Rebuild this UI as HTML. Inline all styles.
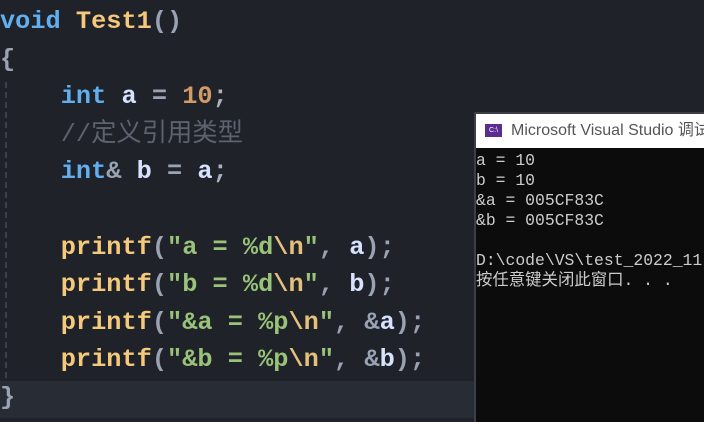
<!DOCTYPE html>
<html><head><meta charset="utf-8"><style>
html,body{margin:0;width:704px;height:422px;overflow:hidden}
body{background:#1f2229;position:relative;font-family:"Liberation Mono","Noto Sans CJK SC",monospace}
.code{position:absolute;left:0;top:3px;font-size:25.3px;font-weight:bold;line-height:37.6px;color:#abb2bf}
.l{height:37.6px;white-space:pre}
.kw{color:#61afef}.fn{color:#f5c97b}.num{color:#d19a66}.cm{color:#5c6370;font-weight:normal}.str{color:#98c379}.esc{color:#e5c07b}.var{color:#d7e2ff}.p{color:#9aa3b3}
.hl{position:absolute;left:0;top:381px;width:476px;height:37px;background:#282c35}
.guide{position:absolute;left:5px;top:82px;height:296px;border-left:2px dashed #3a3f4a}
.con{position:absolute;left:474px;top:112px;width:230px;height:310px;overflow:hidden;background:#0c0c0c;border-left:2px solid #3c3f45;border-top:2px solid #3c3f45;box-sizing:border-box}
.tb{height:34px;background:#fff;font-family:"Liberation Sans","Noto Sans CJK SC",sans-serif;font-size:16px;color:#555;line-height:34px;padding-left:35px;position:relative;white-space:nowrap;overflow:hidden}
.ic{position:absolute;left:9px;top:10px;width:17px;height:13px;background:#5c2d91;color:#fff;font-size:7px;line-height:13px;text-align:center}
.out{font-family:"Liberation Mono","Noto Sans CJK SC",monospace;font-size:16.4px;line-height:20px;color:#cccccc;white-space:pre;padding-top:3px;overflow:hidden}
</style></head><body>
<div class="hl"></div>
<div class="guide"></div>
<div class="code"><div class="l"><span class="kw">void</span> <span class="fn">Test1</span><span class="p">()</span></div><div class="l"><span class="p">{</span></div><div class="l">    <span class="kw">int</span> <span class="var">a</span> <span class="p">=</span> <span class="num">10</span>;</div><div class="l">    <span class="cm">//定义引用类型</span></div><div class="l">    <span class="kw">int</span><span class="p">&amp;</span> <span class="var">b</span> <span class="p">=</span> <span class="var">a</span>;</div><div class="l"> </div><div class="l">    <span class="fn">printf</span><span class="p">(</span><span class="str">"a = %d</span><span class="esc">\n</span><span class="str">"</span><span class="p">,</span> <span class="var">a</span><span class="p">);</span></div><div class="l">    <span class="fn">printf</span><span class="p">(</span><span class="str">"b = %d</span><span class="esc">\n</span><span class="str">"</span><span class="p">,</span> <span class="var">b</span><span class="p">);</span></div><div class="l">    <span class="fn">printf</span><span class="p">(</span><span class="str">"&amp;a = %p</span><span class="esc">\n</span><span class="str">"</span><span class="p">, &amp;</span><span class="var">a</span><span class="p">);</span></div><div class="l">    <span class="fn">printf</span><span class="p">(</span><span class="str">"&amp;b = %p</span><span class="esc">\n</span><span class="str">"</span><span class="p">, &amp;</span><span class="var">b</span><span class="p">);</span></div><div class="l"><span class="p">}</span></div></div>
<div class="con">
<div class="tb"><div class="ic">C:\</div>Microsoft Visual Studio 调试控制台</div>
<div class="out">a = 10
b = 10
&amp;a = 005CF83C
&amp;b = 005CF83C

D:\code\VS\test_2022_11
按任意键关闭此窗口. . .</div>
</div>
</body></html>
